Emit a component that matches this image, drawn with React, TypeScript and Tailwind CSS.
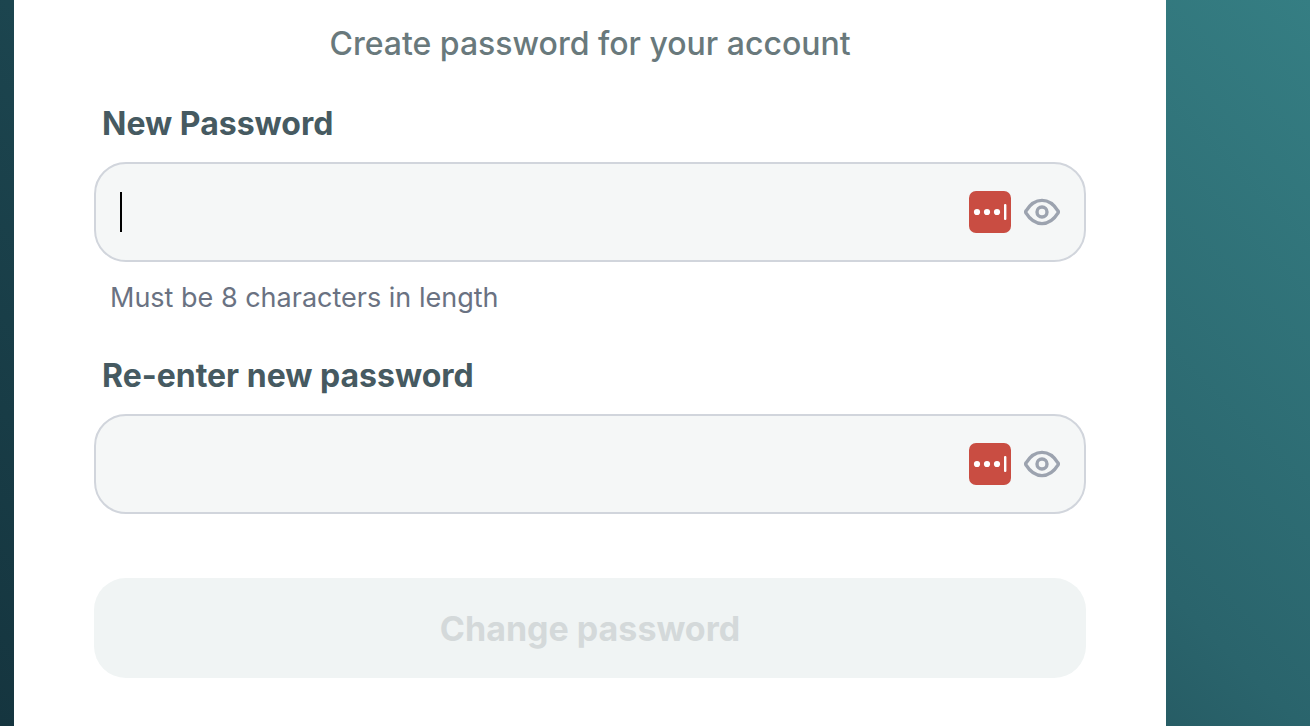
import { useState } from "react";

type PasswordFieldProps = {
    id: string,
    label: string,
    hint?: string,
    showCaret?: boolean
}

//Badge of the password manager, three dots and a cursor
const ManagerIcon = () => (
    <svg viewBox="0 0 42 42" className="size-[42px]" aria-hidden="true">
        <rect width="42" height="42" rx="7" fill="#c94d42" />
        <circle cx="8" cy="21" r="3.1" fill="#fff" />
        <circle cx="18" cy="21" r="3.1" fill="#fff" />
        <circle cx="28" cy="21" r="3.1" fill="#fff" />
        <rect x="35" y="13" width="2.4" height="16" rx="1" fill="#fff" />
    </svg>
);

const EyeIcon = () => (
    <svg viewBox="0 0 36 28" className="h-7 w-9" fill="none" stroke="#9ca3af" strokeWidth="3.4" strokeLinejoin="round" aria-hidden="true">
        <path d="M2.1 15.2Q1.3 14 2.1 12.8C6 6.5 11.500 2.400 18 2.400S30 6.500 33.900 12.800Q34.700 14 33.900 15.200C30 21.500 24.500 25.600 18 25.600S6 21.500 2.100 15.200Z" />
        <circle cx="18" cy="14" r="5" />
    </svg>
);

const PasswordField = ({ id, label, hint, showCaret }: PasswordFieldProps) => {
    const [value, setValue] = useState("");
    const [visible, setVisible] = useState(false);

    return (
        <div className="flex flex-col">
            <label htmlFor={id} className="px-2 text-[32px] leading-10 font-bold text-[#465a61]">
                {label}
            </label>

            <div className="relative mt-[18px] flex h-[100px] items-center rounded-[32px] border-2 border-gray-300 bg-[#f5f7f7] px-6">
                {/*Thick caret while the field is empty*/}
                {showCaret && value === "" && (
                    <span className="pointer-events-none absolute left-6 h-10 w-0.5 bg-black" />
                )}
                <input
                    id={id}
                    type={visible ? "text" : "password"}
                    value={value}
                    onChange={(e) => setValue(e.target.value)}
                    className="h-full min-w-0 flex-1 bg-transparent text-[32px] text-black outline-none"
                />
                <button type="button" aria-label="Fill password" className="shrink-0">
                    <ManagerIcon />
                </button>
                <button
                    type="button"
                    aria-label={visible ? "Hide password" : "Show password"}
                    onClick={() => setVisible(!visible)}
                    className="ml-[13px] shrink-0"
                >
                    <EyeIcon />
                </button>
            </div>

            {hint && (
                <p className="mt-4 px-4 text-[27px] leading-10 text-gray-500">{hint}</p>
            )}
        </div>
    );
};

const App = () => {
    return (
        <div className="flex min-h-screen bg-[linear-gradient(45deg,#15353f_0%,#1c454f_36%,#2a646c_64%,#357e83_100%)] pr-36 pl-3.5 font-['Inter',sans-serif]">
            <form className="flex flex-1 flex-col bg-white px-20 pt-6 pb-12" onSubmit={(e) => e.preventDefault()}>
                <h1 className="text-center text-[32px] leading-10 font-medium text-[#69797c]">
                    Create password for your account
                </h1>

                <div className="mt-10 flex flex-col gap-[38px]">
                    <PasswordField id="newPassword" label="New Password" hint="Must be 8 characters in length" showCaret />
                    <PasswordField id="confirmPassword" label="Re-enter new password" />
                </div>

                <button
                    type="submit"
                    disabled
                    className="mt-16 h-[100px] rounded-[32px] bg-[#f0f4f4] text-[34px] font-bold text-[#d4d9da]"
                >
                    Change password
                </button>
            </form>
        </div>
    );
};

export default App;
